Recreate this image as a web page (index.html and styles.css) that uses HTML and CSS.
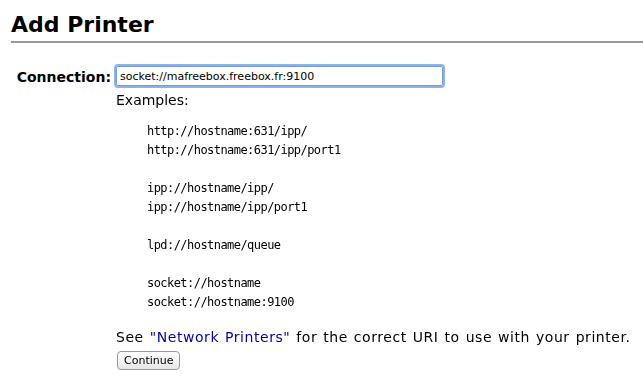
FILE: index.html
```
<!DOCTYPE html>
<html lang="en">
<head>
    <meta charset="UTF-8">
    <title>Add Printer</title>
    <link rel="stylesheet" href="styles.css">
</head>
<body>
    <h2 class="title">Add Printer</h2>

    <form class="add-form">
        <div class="row">
            <label class="row-label" for="uri">Connection:</label>
            <div class="row-value">
                <input type="text" id="uri" class="uri-input" value="socket://mafreebox.freebox.fr:9100" autofocus>
                <div class="examples">
                    <p class="examples-head">Examples:</p>
                    <pre class="examples-list">http://hostname:631/ipp/
http://hostname:631/ipp/port1

ipp://hostname/ipp/
ipp://hostname/ipp/port1

lpd://hostname/queue

socket://hostname
socket://hostname:9100</pre>
                    <p class="hint">See <a href="#">"Network Printers"</a> for the correct URI to use with your printer.</p>
                </div>
                <button type="button" class="continue-btn">Continue</button>
            </div>
        </div>
    </form>
</body>
</html>
```

FILE: styles.css
```
body {
    margin: 0;
    padding: 0 0 0 11px;
    font-family: "DejaVu Sans", sans-serif;
    font-size: 13px;
    color: #000;
    background: #fff;
}
.title {
    margin: 12px 0 0;
    padding-bottom: 3px;
    font-size: 22px;
    font-weight: bold;
    line-height: 26px;
    border-bottom: 2px solid #999;
}
.add-form {
    margin-top: 23px;
}
.row {
    display: flex;
    gap: 5px;
}
.row-label {
    width: 100px;
    text-align: right;
    font-weight: bold;
    font-size: 14px;
    line-height: 20px;
    padding-top: 1px;
}
.row-value {
    display: flex;
    flex-direction: column;
    align-items: flex-start;
}
.uri-input {
    width: 319px;
    height: 16px;
    margin: 0;
    padding: 1px 3px;
    border: 1px solid #7a9bd0;
    outline: 2px solid #8cb3e8;
    border-radius: 2px;
    font-family: "DejaVu Sans", sans-serif;
    font-size: 11px;
}
.examples-head {
    margin: 5px 0 0;
    font-size: 14px;
    line-height: 18px;
}
.examples-list {
    margin: 13px 0 0 31px;
    font-family: "DejaVu Sans Mono", monospace;
    font-size: 12px;
    letter-spacing: -0.55px;
    line-height: 19px;
}
.hint {
    margin: 16px 0 0;
    font-size: 14px;
    letter-spacing: 0.55px;
    word-spacing: 1px;
    line-height: 18px;
}
.hint a {
    color: #0000aa;
    text-decoration: none;
}
.continue-btn {
    margin: 5px 0 0 1px;
    padding: 0 6px;
    height: 19px;
    font-family: "DejaVu Sans", sans-serif;
    font-size: 11px;
    background: linear-gradient(#fff, #e6e6e6);
    border: 1px solid #999;
    border-radius: 4px;
}
```
